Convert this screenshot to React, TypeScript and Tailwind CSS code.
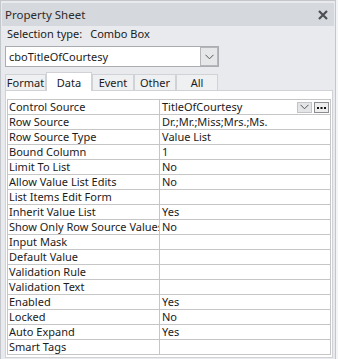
import React from 'react';

const rows: [string, string][] = [
  ['Control Source', 'TitleOfCourtesy'],
  ['Row Source', 'Dr.;Mr.;Miss;Mrs.;Ms.'],
  ['Row Source Type', 'Value List'],
  ['Bound Column', '1'],
  ['Limit To List', 'No'],
  ['Allow Value List Edits', 'No'],
  ['List Items Edit Form', ''],
  ['Inherit Value List', 'Yes'],
  ['Show Only Row Source Values', 'No'],
  ['Input Mask', ''],
  ['Default Value', ''],
  ['Validation Rule', ''],
  ['Validation Text', ''],
  ['Enabled', 'Yes'],
  ['Locked', 'No'],
  ['Auto Expand', 'Yes'],
  ['Smart Tags', ''],
];

const tabs = [
  { name: 'Format', w: 'w-[41px]' },
  { name: 'Data', w: 'w-[46px]' },
  { name: 'Event', w: 'w-[42px]' },
  { name: 'Other', w: 'w-[42px]' },
  { name: 'All', w: 'w-[42px]' },
];

function Chevron() {
  return (
    <svg width="9" height="6" viewBox="0 0 9 6" fill="none">
      <path d="M0.5 0.8 L4.5 4.8 L8.5 0.8" stroke="#555" strokeWidth="1" />
    </svg>
  );
}

export default function App() {
  return (
    <div className="w-[338px] h-[359px] bg-[#f4f5f6] overflow-hidden text-[11px] leading-[15px] text-[#1b1b1b]" style={{ fontFamily: '"Noto Sans", sans-serif' }}>
      <div className="w-[336px] h-[359px] bg-[#e8eaed] border-x border-t border-[#c3c6ca] pt-[2px] px-[1px]">
        {/* title bar */}
        <div className="h-[23px] bg-[#d5d8dc] flex items-center justify-between pl-[3px] pr-[6px]">
          <span className="text-[11.5px] text-[#2b2b2b]">Property Sheet</span>
          <svg width="10" height="10" viewBox="0 0 10 10">
            <path d="M1 1 L9 9 M9 1 L1 9" stroke="#4d4f52" strokeWidth="2.2" />
          </svg>
        </div>

        <div className="px-[3px]">
          <div className="h-[14px] flex items-center pl-[2px] gap-[8px]">
            <span>Selection type:</span>
            <span>Combo Box</span>
          </div>

          {/* object combo */}
          <div className="mt-[6px] w-[214px] h-[21px] bg-white border border-[#a9acb1] flex items-center">
            <span className="flex-1 pl-[3px]">cboTitleOfCourtesy</span>
            <div className="w-[18px] h-[19px] bg-[#e6e7e8] border border-[#b4b6b9] flex items-center justify-center">
              <Chevron />
            </div>
          </div>

          {/* tabs */}
          <div className="mt-[5px] flex items-end h-[18px]">
            {tabs.map((t) =>
              t.name === 'Data' ? (
                <div key={t.name} className={`${t.w} h-[19px] -mb-[1px] bg-white border-x border-t border-[#d0d2d5] flex items-center justify-center relative z-10`}>
                  {t.name}
                </div>
              ) : (
                <div key={t.name} className={`${t.w} h-[16px] bg-[#eef0f2] border-x border-t border-[#d0d2d5] flex items-center justify-center`}>
                  {t.name}
                </div>
              )
            )}
          </div>

          {/* panel */}
          <div className="w-[328px] h-[268px] bg-white border border-[#d0d2d5] pl-[1px] pt-[8px]">
            <div className="w-[324px] border-t border-l border-[#c6c6c6]">
              {rows.map(([label, value], i) => (
                <div key={label} className="flex h-[15px]">
                  <div className="w-[152px] h-[15px] border-r border-b border-[#c6c6c6] pl-[1px] overflow-hidden whitespace-nowrap leading-[14px]">
                    {label}
                  </div>
                  <div className="w-[171px] h-[15px] border-r border-b border-[#c6c6c6] pl-[2px] flex items-center whitespace-nowrap leading-[14px]">
                    <span className="flex-1">{value}</span>
                    {i === 0 && (
                      <div className="flex items-center gap-[2px] pr-[1px]">
                        <div className="w-[15px] h-[11px] bg-[#e4e5e6] border border-[#c2c4c7] flex items-center justify-center">
                          <Chevron />
                        </div>
                        <div className="w-[15px] h-[11px] bg-[#eeeeee] border border-[#8a8c8f] flex items-center justify-center">
                          <svg width="9" height="3" viewBox="0 0 9 3">
                            <rect x="0" y="1" width="2" height="2" fill="#111" />
                            <rect x="3.5" y="1" width="2" height="2" fill="#111" />
                            <rect x="7" y="1" width="2" height="2" fill="#111" />
                          </svg>
                        </div>
                      </div>
                    )}
                  </div>
                </div>
              ))}
            </div>
          </div>
        </div>
      </div>
    </div>
  );
}
